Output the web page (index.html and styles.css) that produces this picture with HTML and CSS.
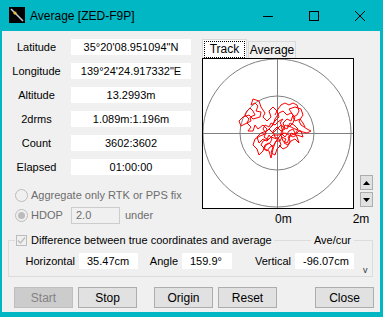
FILE: index.html
```html
<!DOCTYPE html>
<html lang="en">
<head>
  <meta charset="UTF-8" />
  <title>Average [ZED-F9P]</title>
  <link rel="stylesheet" href="styles.css">
</head>
<body>
  <div class="window">
    <!-- title bar -->
    <div class="titlebar">
      <svg class="app-icon" width="16" height="16" viewBox="0 0 16 16">
        <rect width="16" height="16" fill="#000"/>
        <line x1="2" y1="2" x2="14" y2="14" stroke="#c8c8c8" stroke-width="1.6"/>
        <circle cx="6" cy="6" r="1.6" fill="#e8c040"/>
      </svg>
      <span class="title">Average [ZED-F9P]</span>
      <div class="caption">
        <span class="cap-btn"><svg width="10" height="10"><line x1="0" y1="5.5" x2="10" y2="5.5" stroke="#000"/></svg></span>
        <span class="cap-btn"><svg width="10" height="10"><rect x="0.5" y="0.5" width="9" height="9" fill="none" stroke="#000"/></svg></span>
        <span class="cap-btn"><svg width="10" height="10"><path d="M0 0L10 10M10 0L0 10" stroke="#000"/></svg></span>
      </div>
    </div>

    <div class="client">
      <div class="top">
        <div class="left">
          <div class="fields">
            <span class="label">Latitude</span><span class="value">35°20'08.951094"N</span>
            <span class="label">Longitude</span><span class="value">139°24'24.917332"E</span>
            <span class="label">Altitude</span><span class="value">13.2993m</span>
            <span class="label">2drms</span><span class="value">1.089m:1.196m</span>
            <span class="label">Count</span><span class="value">3602:3602</span>
            <span class="label">Elapsed</span><span class="value">01:00:00</span>
          </div>
          <div class="options">
            <div class="opt">
              <span class="radio"></span>
              <span class="dim">Aggregate only RTK or PPS fix</span>
            </div>
            <div class="opt">
              <span class="radio checked"></span>
              <span class="dim opt-label">HDOP</span>
              <span class="hdop-box">2.0</span>
              <span class="dim under">under</span>
            </div>
          </div>
        </div>

        <div class="plot-area">
          <div class="tabs">
            <span class="tab active"><span class="focus">Track</span></span>
            <span class="tab">Average</span>
          </div>
          <div class="plot-row">
            <div class="plot">
              <svg width="150" height="149" viewBox="0 0 150 149">
                <circle cx="74" cy="74" r="74" fill="none" stroke="#808080"/>
                <circle cx="74" cy="74" r="37" fill="none" stroke="#808080"/>
                <line x1="0" y1="74.5" x2="150" y2="74.5" stroke="#808080"/>
                <line x1="74.5" y1="0" x2="74.5" y2="149" stroke="#808080"/>
                <polyline fill="none" stroke="#ff0000" stroke-width="1"
                  points="48,46 52,44 55,47 53,52 58,53 57,58 50,60 46,56 40,58 36,62 38,67 44,64 48,68 45,72 50,72 52,66 55,70 60,66 64,70 62,75 57,77 52,80 50,86 54,90 56,96 60,92 62,86 66,84 70,88 68,94 72,96 74,90 78,86 76,80 72,78 70,72 74,68 78,72 82,70 80,64 84,60 88,62 90,56 86,50 92,48 98,50 100,56 96,62 98,66 104,70 108,72 104,74 96,72 92,76 88,74 86,80 84,84 80,82 78,76 74,80 68,78 64,82 60,80 56,84 54,78 58,74 64,72 68,68 72,62 76,58 74,52 70,48 66,52 68,58 64,62 60,58 62,54 58,48 56,42 50,40 48,46"/>
                <polyline fill="none" stroke="#ff0000" stroke-width="1"
                  points="76,86 80,90 84,88 88,82 92,80 96,84 94,78 90,70 86,72 82,78 78,74 82,66 86,68 90,64 92,58 88,54 84,56 80,52 76,54 72,60 70,66 66,70 70,74 74,70 78,66 80,74 76,78 72,84 70,90 68,99 66,92 62,90 58,86 60,82 66,80 70,76 76,76 82,74 86,76 90,78 94,76 100,78 98,72 92,70 88,68 84,66"/>
                <polyline fill="none" stroke="#ff0000" stroke-width="1"
                  points="44,52 42,56 46,60 44,64 48,62 47,58 52,56 50,52 47,49 44,52"/>
                <polyline fill="none" stroke="#ff0000" stroke-width="1"
                  points="60,70 63,74 61,78 64,80 66,76 69,80 67,84 63,86 61,90 64,92 67,88 71,86 73,82 77,82 79,78 83,80 81,84 85,86 87,82 85,78 89,76 93,74 95,70 91,66 87,64 84,70 80,68 77,64 80,60 76,62 72,66 68,64 66,68 62,66 60,70"/>
                <polyline fill="none" stroke="#ff0000" stroke-width="1"
                  points="72,56 75,50 78,46 82,44 86,46 90,44 94,46 96,52 94,56 90,58 92,62 97,60 100,64 102,68"/>
              </svg>
            </div>
            <div class="spin">
              <span class="spin-btn"><svg width="7" height="4"><path d="M3.5 0L7 4H0Z" fill="#000"/></svg></span>
              <span class="spin-btn"><svg width="7" height="4"><path d="M0 0H7L3.5 4Z" fill="#000"/></svg></span>
            </div>
          </div>
          <div class="scale">
            <span class="zero">0m</span>
            <span class="two">2m</span>
          </div>
        </div>
      </div>

      <!-- difference group -->
      <div class="group">
        <div class="group-head">
          <span class="legend">
            <svg class="check" width="11" height="11" viewBox="0 0 11 11">
              <rect x="0.5" y="0.5" width="10" height="10" fill="#f0f0f0" stroke="#bcbcbc"/>
              <path d="M2 5.5L4.5 8L9 2.5" fill="none" stroke="#bcbcbc" stroke-width="1.4"/>
            </svg>
            Difference between true coordinates and average
          </span>
          <span class="legend2">Ave/cur</span>
        </div>
        <div class="diff-row">
          <span class="dlabel">Horizontal</span><span class="dvalue">35.47cm</span>
          <span class="dlabel">Angle</span><span class="dvalue">159.9°</span>
          <span class="dlabel">Vertical</span><span class="dvalue">-96.07cm</span>
          <span class="more">v</span>
        </div>
      </div>

      <div class="buttons">
        <button class="btn" disabled>Start</button>
        <button class="btn btn-stop">Stop</button>
        <button class="btn btn-origin">Origin</button>
        <button class="btn btn-reset">Reset</button>
        <button class="btn btn-close">Close</button>
      </div>
    </div>
  </div>
</body>
</html>
```

FILE: styles.css
```css
* {
  margin: 0;
  padding: 0;
  box-sizing: border-box;
  font-family: 'Liberation Sans', Arial, sans-serif;
}
html, body {
  width: 383px;
  height: 317px;
  overflow: hidden;
}
.window {
  width: 383px;
  height: 317px;
  background-color: #00b7c3;
  display: flex;
  flex-direction: column;
}
.titlebar {
  height: 31px;
  display: flex;
  align-items: center;
  color: #000;
}
.app-icon {
  margin-left: 9px;
  margin-top: -2px;
}
.title {
  margin-left: 5px;
  font-size: 12px;
}
.caption {
  margin-left: auto;
  display: flex;
  height: 31px;
}
.cap-btn {
  width: 46px;
  display: flex;
  align-items: center;
  justify-content: center;
}
.client {
  flex: 1;
  margin: 0 3px 5px 2px;
  background-color: #f0f0f0;
  font-size: 11px;
  color: #000;
}
.top {
  display: flex;
  padding-top: 8px;
}
.left {
  width: 189px;
}
.fields {
  display: grid;
  grid-template-columns: 69px 120px;
  grid-auto-rows: 16px;
  row-gap: 8px;
}
.label {
  text-align: center;
  line-height: 16px;
}
.value {
  background-color: #fff;
  text-align: center;
  line-height: 16px;
}
.options {
  margin-top: 10px;
}
.opt {
  height: 20px;
  display: flex;
  align-items: center;
  padding-left: 13px;
}
.radio {
  width: 13px;
  height: 13px;
  border: 1px solid #bcbcbc;
  border-radius: 50%;
  background-color: #f0f0f0;
  margin-right: 3px;
  display: flex;
  align-items: center;
  justify-content: center;
}
.radio.checked::after {
  content: "";
  width: 7px;
  height: 7px;
  border-radius: 50%;
  background-color: #bcbcbc;
}
.dim {
  color: #6d6d6d;
}
.opt-label {
  width: 40px;
}
.hdop-box {
  width: 49px;
  height: 17px;
  border: 1px solid #cccccc;
  color: #6d6d6d;
  line-height: 15px;
  padding-left: 4px;
}
.under {
  margin-left: 5px;
}
.plot-area {
  margin-left: 11px;
}
.tabs {
  display: flex;
  align-items: flex-end;
  height: 19px;
}
.tab {
  height: 17px;
  width: 48px;
  margin-left: 1px;
  border: 1px solid #d9d9d9;
  border-bottom: none;
  text-align: center;
  line-height: 16px;
  font-size: 12px;
}
.tab.active {
  height: 19px;
  width: 45px;
  margin-left: 0;
  background-color: #fff;
  padding: 1px 1px 0;
}
.focus {
  display: block;
  height: 17px;
  border: 1px dotted #000;
  line-height: 15px;
}
.plot-row {
  display: flex;
  align-items: flex-end;
}
.plot {
  width: 152px;
  height: 151px;
  border: 1px solid #000;
  background-color: #fff;
}
.plot svg {
  display: block;
}
.spin {
  margin-left: 6px;
  margin-bottom: 2px;
  display: flex;
  flex-direction: column;
  gap: 2px;
}
.spin-btn {
  width: 13px;
  height: 15px;
  background-color: #e1e1e1;
  border: 1px solid #adadad;
  display: flex;
  align-items: center;
  justify-content: center;
}
.scale {
  display: flex;
  margin-top: 3px;
  line-height: 14px;
  font-size: 12px;
}
.zero {
  margin-left: 73px;
}
.two {
  margin-left: 61px;
}
.group {
  margin: 14px 7px 0 6px;
  border: 1px solid #dcdcdc;
  padding-bottom: 7px;
}
.group-head {
  display: flex;
  height: 14px;
  margin-top: -8px;
  padding-left: 6px;
  line-height: 14px;
  font-size: 11px;
}
.legend {
  display: flex;
  align-items: center;
  gap: 4px;
  background-color: #f0f0f0;
  padding: 0 2px 0 1px;
}
.legend2 {
  margin-left: auto;
  margin-right: 18px;
  background-color: #f0f0f0;
  padding: 0 3px;
}
.diff-row {
  display: grid;
  grid-template-columns: 70px 59px 44px 50px 63px 59px auto;
  align-items: center;
  margin-top: 6px;
  height: 16px;
  font-size: 11px;
}
.dlabel {
  text-align: right;
  padding-right: 4px;
}
.dvalue {
  background-color: #fff;
  line-height: 16px;
  padding-left: 8px;
}
.more {
  align-self: end;
  margin: 0 0 -6px 9px;
  font-size: 9px;
  color: #333;
}
.buttons {
  display: flex;
  margin-top: 10px;
  padding-left: 12px;
}
.btn {
  width: 59px;
  height: 21px;
  background-color: #e1e1e1;
  border: 1px solid #adadad;
  font-size: 12px;
  color: #000;
}
.btn:disabled {
  background-color: #cccccc;
  border-color: #bfbfbf;
  color: #838383;
}
.btn-stop, .btn-reset {
  margin-left: 5px;
}
.btn-origin {
  margin-left: 17px;
}
.btn-close {
  margin-left: 38px;
}
```
